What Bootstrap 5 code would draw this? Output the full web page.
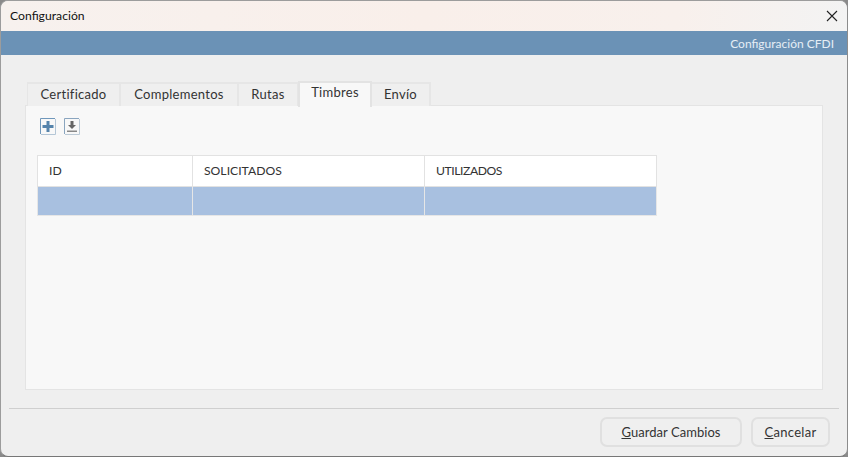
<!DOCTYPE html>
<html lang="es">
<head>
<meta charset="utf-8">
<title>Configuración</title>
<link rel="stylesheet" href="https://cdn.jsdelivr.net/npm/bootstrap@5.3.0/dist/css/bootstrap.min.css">
<style>
html,body{height:100%;margin:0;background:#8a8a8a;overflow:hidden}
body{font-family:"Lato","Liberation Sans",sans-serif;font-size:13px;color:#222}
.win{width:848px;height:457px;background:#efefef;border:1px solid #9c9c9c;border-bottom-color:#777;border-right-color:#8c8c8c;border-radius:8px;overflow:hidden}
.win>*{flex:none}
.titlebar{height:30px;background:linear-gradient(90deg,#f7f1ee 0%,#f9efea 50%,#f8f0ec 80%,#f3f3f3 100%);padding-left:9px;padding-right:8px;font-size:12.2px;color:#111}
.closex{width:14px;height:14px;display:block}
.bluebar{height:24px;background:#6b92b6;color:#e6eef5;font-size:12px;padding-right:13px;padding-top:2px}
.mainarea{padding:26px 24px 0 24px;height:335px}
.nav-tabs.tabsx{border-bottom:0;height:24px;align-items:flex-end;position:relative;z-index:1;padding-left:2px}
.tabsx .nav-link{height:24px;padding:0;text-align:center;border:2px solid #e6e6e6;border-bottom:0;border-left-width:0;border-radius:0;margin:0;background:#efefef;color:#333;font-size:13px;letter-spacing:.28px;line-height:21px}
.tabsx .nav-item:first-child .nav-link{border-left-width:1px}
.tabsx .nav-link.active{height:26px;background:#f8f8f8;color:#333;border:2px solid #e3e3e3;border-bottom:0;line-height:18px;margin-bottom:-1px}
.tabw1{width:94px}.tabw2{width:118px}.tabw3{width:60px}.tabw4{width:73px}.tabw5{width:59px}
.tabsx .tabw4.nav-link{margin-left:-1px;width:74px}
.panelx{height:285px;background:#f8f8f8;border:1px solid #e4e4e4;padding:11px 11px 0 11px}
.toolx{height:18px;gap:8px;padding-left:3px}
.toolx svg{display:block;width:16px;height:17px}
.gridx{width:619px;margin:0;margin-top:20px;table-layout:fixed;border-collapse:collapse;--bs-table-bg:transparent}
.gridx th,.gridx td{border:1px solid #e2e2e2;padding:0 11px;font-weight:400;color:#333;font-size:12.2px;vertical-align:middle}
.gridx th{height:31px;background:#fff}
.gridx th.colu{letter-spacing:-.45px}
.gridx td{height:29px;background:#a8c0e0;border-color:#e6e6e6}
.footx{padding:0 8px;margin-top:18px}
.rulex{height:1px;background:#cfcfcf;margin:0}
.btnrow{padding:8px 9px 0 0;gap:9px}
.btn.actx{height:30px;background:#efefef;border:2px solid #e0e0e0;border-radius:7px;color:#333;font-size:13px;letter-spacing:.3px;padding:0;line-height:26px}
.btn.actg{width:142px;letter-spacing:.05px}
.btn.actc{width:79px}
</style>
</head>
<body>
<div class="win d-flex flex-column">
  <div class="titlebar d-flex align-items-center justify-content-between">
    <span>Configuración</span>
    <svg class="closex me-0" viewBox="0 0 14 14"><path d="M2 2 L12 12 M12 2 L2 12" stroke="#222" stroke-width="1.1" fill="none"/></svg>
  </div>
  <div class="bluebar d-flex align-items-center justify-content-end">Configuración CFDI</div>
  <div class="mainarea">
    <ul class="nav nav-tabs tabsx">
      <li class="nav-item"><a class="nav-link tabw1" href="#">Certificado</a></li>
      <li class="nav-item"><a class="nav-link tabw2" href="#">Complementos</a></li>
      <li class="nav-item"><a class="nav-link tabw3" href="#">Rutas</a></li>
      <li class="nav-item"><a class="nav-link tabw4 active" href="#">Timbres</a></li>
      <li class="nav-item"><a class="nav-link tabw5" href="#">Envío</a></li>
    </ul>
    <div class="panelx">
      <div class="toolx d-flex align-items-center">
        <svg viewBox="0 0 16 17"><path d="M.5 16V.5H15" fill="none" stroke="#6f97bb"/><path d="M15.5 1v15.5H1" fill="none" stroke="#b4c6d6"/><path d="M6.5 3h3v4h4v3h-4v4h-3v-4h-4V7h4z" fill="#5583ab"/></svg>
        <svg viewBox="0 0 16 17"><path d="M.5 16V.5H15" fill="none" stroke="#8aa5bf"/><path d="M15.5 1v15.5H1" fill="none" stroke="#bccad6"/><path d="M6.5 3h3v4h2.5l-4 4-4-4h2.5z" fill="#666"/><path d="M3 12.5h10v1.5H3z" fill="#888"/></svg>
      </div>
      <table class="table gridx">
        <colgroup><col style="width:155px"><col style="width:232px"><col style="width:232px"></colgroup>
        <thead><tr><th>ID</th><th>SOLICITADOS</th><th class="colu">UTILIZADOS</th></tr></thead>
        <tbody><tr><td></td><td></td><td></td></tr></tbody>
      </table>
    </div>
  </div>
  <div class="footx">
    <div class="rulex"></div>
    <div class="btnrow d-flex justify-content-end">
      <button type="button" class="btn actx actg"><u>G</u>uardar Cambios</button>
      <button type="button" class="btn actx actc"><u>C</u>ancelar</button>
    </div>
  </div>
</div>
</body>
</html>
